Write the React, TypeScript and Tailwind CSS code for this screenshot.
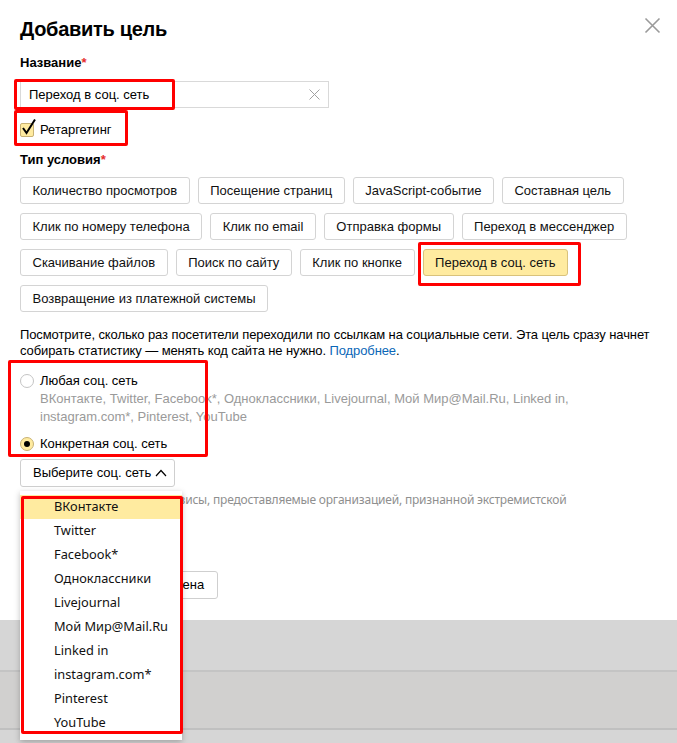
import React from 'react';

const conditionRows: string[][] = [
  ['Количество просмотров', 'Посещение страниц', 'JavaScript-событие', 'Составная цель'],
  ['Клик по номеру телефона', 'Клик по email', 'Отправка формы', 'Переход в мессенджер'],
  ['Скачивание файлов', 'Поиск по сайту', 'Клик по кнопке', 'Переход в соц. сеть'],
  ['Возвращение из платежной системы'],
];

const networks = [
  'ВКонтакте',
  'Twitter',
  'Facebook*',
  'Одноклассники',
  'Livejournal',
  'Мой Мир@Mail.Ru',
  'Linked in',
  'instagram.com*',
  'Pinterest',
  'YouTube',
];

const selected = 'Переход в соц. сеть';

function Mark({ className }: { className: string }) {
  // red annotation frame drawn over the screenshot
  return <div className={`absolute border-[3px] border-[#ff0000] rounded-[2px] pointer-events-none ${className}`} />;
}

function CondButton({ label }: { label: string }) {
  const on = label === selected;
  return (
    <button
      className={`h-[27px] px-[11.5px] rounded-[3px] border text-[13px] leading-none text-[#111] ${on ? 'bg-[#ffeba0] border-[#d9c27c]' : 'bg-white border-[#d4d4d4]'}`}
    >
      {label}
    </button>
  );
}

function Radio({ checked }: { checked?: boolean }) {
  return (
    <span
      className={`w-[14px] h-[14px] rounded-full border flex items-center justify-center shrink-0 ${checked ? 'bg-[#ffeba0] border-[#c8b274]' : 'bg-white border-[#c4c4c4]'}`}
    >
      {checked && <span className="w-[6px] h-[6px] rounded-full bg-black" />}
    </span>
  );
}

export default function App() {
  return (
    <div className="relative w-[677px] h-[743px] overflow-hidden bg-[#d6d6d6] font-['Liberation_Sans',Arial,sans-serif] text-[13px] text-black">
      <div className="relative bg-white h-[620px] px-[20px] pt-[16px]">
        <h1 className="text-[20px] leading-[26px] font-bold tracking-[-0.3px]">Добавить цель</h1>
        <svg className="absolute left-[644px] top-[17px]" width="17" height="17" viewBox="0 0 17 17">
          <path d="M1.5 1.5 L15.5 15.5 M15.5 1.5 L1.5 15.5" stroke="#9a9a9a" strokeWidth="1.6" />
        </svg>

        <div className="mt-[13px] font-bold leading-[16px]">
          Название<span className="text-[#e52d2d]">*</span>
        </div>
        <div className="mt-[10px] w-[309px] h-[27px] border border-[#d9d9d9] flex items-center pl-[8px] pr-[8px]">
          <span className="flex-1">Переход в соц. сеть</span>
          <svg width="11" height="11" viewBox="0 0 11 11">
            <path d="M0.5 0.5 L10.5 10.5 M10.5 0.5 L0.5 10.5" stroke="#a0a0a0" strokeWidth="1" />
          </svg>
        </div>

        <div className="mt-[14px] flex items-center h-[16px]">
          <span className="relative w-[14px] h-[14px] rounded-[2px] bg-[#ffeba0] border border-[#c8b274] shrink-0">
            <svg className="absolute left-[0px] top-[-6px]" width="16" height="18" viewBox="0 0 16 18">
              <path d="M2 10 L5.5 15 L14 1.5" stroke="#000" strokeWidth="2" fill="none" />
            </svg>
          </span>
          <span className="ml-[6px]">Ретаргетинг</span>
        </div>

        <div className="mt-[14px] font-bold leading-[16px]">
          Тип условия<span className="text-[#e52d2d]">*</span>
        </div>

        <div className="mt-[9px] flex flex-col gap-[9px]">
          {conditionRows.map((row, i) => (
            <div key={i} className="flex gap-[8px]">
              {row.map((b) => (
                <CondButton key={b} label={b} />
              ))}
            </div>
          ))}
        </div>

        <p className="mt-[15px] leading-[16px] whitespace-nowrap tracking-[-0.1px]">
          Посмотрите, сколько раз посетители переходили по ссылкам на социальные сети. Эта цель сразу начнет
          <br />
          собирать статистику — менять код сайта не нужно. <span className="text-[#0b67b8]">Подробнее</span>.
        </p>

        <div className="mt-[14px] flex items-center gap-[6px] h-[16px]">
          <Radio />
          <span>Любая соц. сеть</span>
        </div>
        <div className="ml-[20px] mt-[1px] text-[#9a9a9a] leading-[18px]">
          ВКонтакте, Twitter, Facebook*, Одноклассники, Livejournal, Мой Мир@Mail.Ru, Linked in,
          <br />
          instagram.com*, Pinterest, YouTube
        </div>
        <div className="mt-[10px] flex items-center gap-[6px] h-[16px]">
          <Radio checked />
          <span>Конкретная соц. сеть</span>
        </div>

        <button className="mt-[7px] h-[28px] w-[155px] border border-[#cfcfcf] rounded-[3px] flex items-center pl-[12px] gap-[4px]">
          <span>Выберите соц. сеть</span>
          <svg width="12" height="8" viewBox="0 0 12 8">
            <path d="M1 7 L6 1.5 L11 7" stroke="#000" strokeWidth="1.2" fill="none" />
          </svg>
        </button>

        <div className="mt-[4px] text-[#8f8f8f] font-['Noto_Sans',sans-serif] text-[12px] leading-[18px] tracking-[-0.2px]">
          Facebook и Instagram — сервисы, предоставляемые организацией, признанной экстремистской
        </div>

        <div className="mt-[62px] flex gap-[8px]">
          <button className="h-[28px] px-[13px] rounded-[3px] bg-[#ffdb4d]">Добавить цель</button>
          <button className="h-[28px] px-[13px] rounded-[3px] border border-[#cfcfcf]">Отмена</button>
        </div>

        <Mark className="left-[14px] top-[79px] w-[161px] h-[31px]" />
        <Mark className="left-[14px] top-[110px] w-[114px] h-[36px]" />
        <Mark className="left-[418px] top-[242px] w-[163px] h-[44px]" />
        <Mark className="left-[8px] top-[360px] w-[200px] h-[97px]" />
      </div>

      <div className="h-[52px] border-b-2 border-[#c4c4c4]" />
      <div className="h-[58px] bg-[#d1d0cf] border-b-2 border-[#c0c0c0]" />

      <div className="absolute left-[20px] top-[491px] w-[162px] bg-white shadow-[0_2px_6px_rgba(0,0,0,0.25)] pt-[4px] pb-[5px] font-['Noto_Sans',sans-serif] text-[12.8px] text-[#111]">
        {networks.map((n, i) => (
          <div key={n} className={`h-[24px] flex items-center pl-[34px] ${i === 0 ? 'bg-[#ffeba0]' : ''}`}>
            {n}
          </div>
        ))}
      </div>
      <Mark className="left-[21px] top-[496px] w-[162px] h-[238px]" />
    </div>
  );
}
